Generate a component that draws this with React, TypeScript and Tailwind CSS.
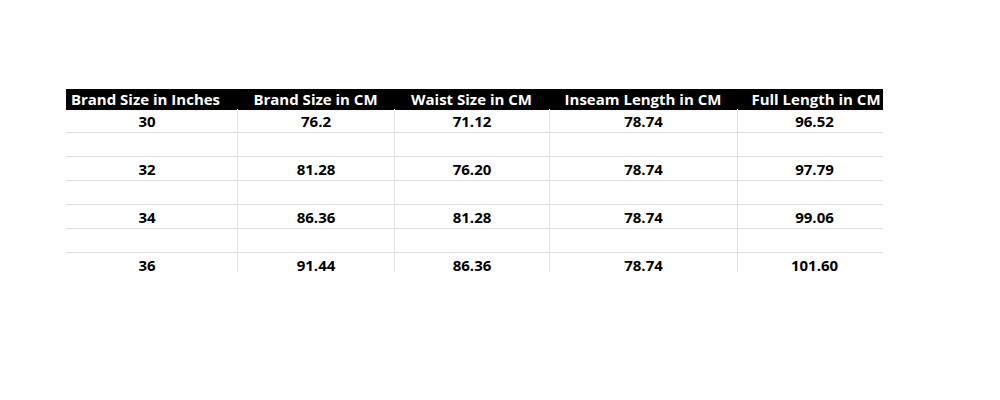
export default function App() {
  const cols = ['w-[171px]', 'w-[157px]', 'w-[155px]', 'w-[188px]', 'w-[146px]'];
  const headers = ['Brand Size in Inches', 'Brand Size in CM', 'Waist Size in CM', 'Inseam Length in CM', 'Full Length in CM'];
  // little nudges so the text lands where it does in the sheet
  const headPad = ['pr-[12px]', '', '', '', 'pl-[12px]'];
  const cellPad = ['pr-[9px]', '', '', '', 'pl-[8px]'];
  const rows: (string[] | null)[] = [
    ['30', '76.2', '71.12', '78.74', '96.52'],
    null,
    ['32', '81.28', '76.20', '78.74', '97.79'],
    null,
    ['34', '86.36', '81.28', '78.74', '99.06'],
    null,
    ['36', '91.44', '86.36', '78.74', '101.60'],
  ];

  return (
    <div className="w-[1000px] h-[400px] bg-white font-['Open_Sans',Arial,sans-serif] font-bold">
      <div className="pt-[89px] pl-[66px]">
        <div className="flex h-[21px] w-[817px] bg-black text-white text-[15px] leading-[21px]">
          {headers.map((h, i) => (
            <div key={h} className={`${cols[i]} ${headPad[i]} text-center whitespace-nowrap`}>
              {h}
            </div>
          ))}
        </div>
        {rows.map((r, ri) => {
          const last = ri === rows.length - 1;
          const h = ri === 0 ? 'h-[23px]' : last ? 'h-[19px]' : 'h-[24px]';
          return (
            <div
              key={ri}
              className={`flex w-[817px] text-black text-[15px] leading-[24px] ${h} ${last ? '' : 'border-b border-[#dedede]'}`}
            >
              {cols.map((c, ci) => (
                <div
                  key={ci}
                  className={`${c} ${h} ${cellPad[ci]} text-center ${ci === 0 ? '' : 'border-l border-[#e3e3e3]'} ${ri === 0 ? '-mt-px' : ''}`}
                >
                  {r ? r[ci] : ''}
                </div>
              ))}
            </div>
          );
        })}
      </div>
    </div>
  );
}
